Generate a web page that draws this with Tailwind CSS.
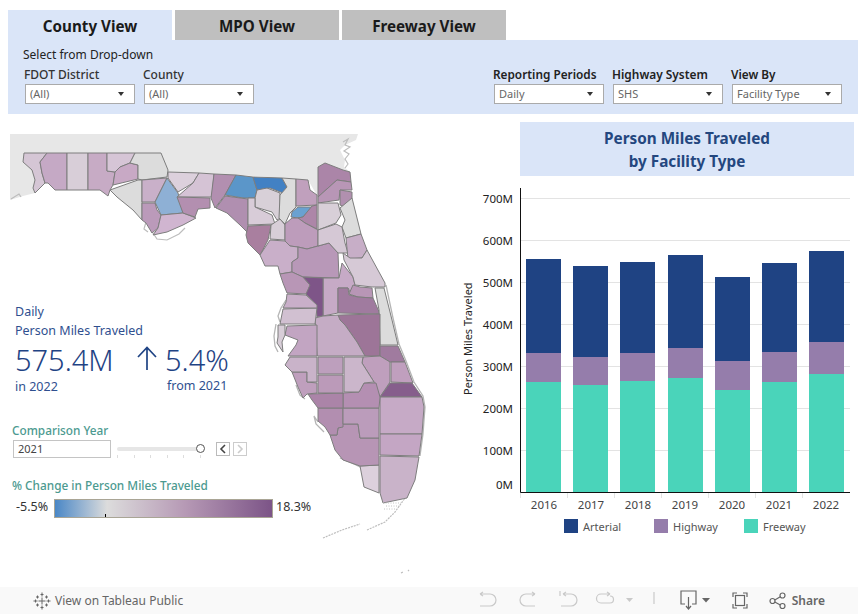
<!DOCTYPE html>
<html>
<head>
<meta charset="utf-8">
<script src="https://cdn.jsdelivr.net/npm/@tailwindcss/browser@4"></script>
</head>
<body class="bg-white font-['Noto_Sans',sans-serif] w-[858px] h-[614px] overflow-hidden flex flex-col">
<div class="h-[587px] pt-[10px] relative">
  <div class="flex pl-2 h-[30px] gap-[3px]">
    <div class="w-[164px] bg-[#dae5f8] flex items-center justify-center pt-[2px] text-[15.2px] font-bold text-[#1a1a1a]">County View</div>
    <div class="w-[164px] bg-[#bfbfbf] flex items-center justify-center pt-[2px] text-[15.2px] font-bold text-[#1a1a1a]">MPO View</div>
    <div class="w-[164px] bg-[#bfbfbf] flex items-center justify-center pt-[2px] text-[15.2px] font-bold text-[#1a1a1a]">Freeway View</div>
  </div>
  <div class="ml-2 h-[74px] bg-[#dae5f8] flex justify-between pl-[15px] pr-4 text-[#222]">
    <div>
      <div class="text-[12px] leading-4 mt-[7px] ">Select from Drop-down</div>
      <div class="flex gap-[9px] mt-[4px] pl-[2px]">
        <div class="w-[110px]">
          <div class="text-[12px] leading-4 font-medium text-[#333] -ml-px">FDOT District</div>
          <div class="mt-px h-5 border border-[#aaa] bg-white flex items-center justify-between pl-1 pr-[10px] text-[11px] text-[#666]">(All)<span class="w-0 h-0 border-x-[3.5px] border-x-transparent border-t-[4px] border-t-[#333]"></span></div>
        </div>
        <div class="w-[110px]">
          <div class="text-[12px] leading-4 font-medium text-[#333] -ml-px">County</div>
          <div class="mt-px h-5 border border-[#aaa] bg-white flex items-center justify-between pl-1 pr-[10px] text-[11px] text-[#666]">(All)<span class="w-0 h-0 border-x-[3.5px] border-x-transparent border-t-[4px] border-t-[#333]"></span></div>
        </div>
      </div>
    </div>
    <div class="flex gap-[9px] mt-[26px]">
      <div class="w-[110px]">
        <div class="text-[11.8px] leading-4 font-semibold text-[#222] whitespace-nowrap -ml-px">Reporting Periods</div>
        <div class="mt-[2px] h-5 border border-[#aaa] bg-white flex items-center justify-between pl-1 pr-[10px] text-[11px] text-[#666]">Daily<span class="w-0 h-0 border-x-[3.5px] border-x-transparent border-t-[4px] border-t-[#333]"></span></div>
      </div>
      <div class="w-[110px]">
        <div class="text-[11.9px] leading-4 font-semibold text-[#222] whitespace-nowrap -ml-px">Highway System</div>
        <div class="mt-[2px] h-5 border border-[#aaa] bg-white flex items-center justify-between pl-1 pr-[10px] text-[11px] text-[#666]">SHS<span class="w-0 h-0 border-x-[3.5px] border-x-transparent border-t-[4px] border-t-[#333]"></span></div>
      </div>
      <div class="w-[110px]">
        <div class="text-[11.8px] leading-4 font-semibold text-[#222] whitespace-nowrap -ml-px">View By</div>
        <div class="mt-[2px] h-5 border border-[#aaa] bg-white flex items-center justify-between pl-1 pr-[10px] text-[11px] text-[#666]">Facility Type<span class="w-0 h-0 border-x-[3.5px] border-x-transparent border-t-[4px] border-t-[#333]"></span></div>
      </div>
    </div>
  </div>

  <div class="flex h-[473px]">
    <div class="relative w-[460px] shrink-0">
      <svg class="absolute left-0 top-0" width="460" height="473" viewBox="0 114 460 473">
        <path d="M10 134H358L356 140 345 145 340 150 345 160 344 167 350 172 343 170 325 163 318 167 318 197 308 180 296 179 282 178 253 176 237 175 214 174 199 173 168 172 161 153 24 153 23 162 32 170 35 180 33 188 35 193 23 196 10 200Z" fill="#e7e7e7"/>
        <path d="M343 142l5-3-3 6 5 2-6 4 5 3-4 5 3 5-3 4M11 199l8-5 2 3M153 233l4 6 10 1 12-6 6-6M146 222l-2 7 4 3" fill="none" stroke="#bdbdbd" stroke-width="1.2"/>
        <path d="M386 285 393 318 399 344 406 361 414 382 423 396 425 407 423 434 420 456M278 352l-3-6-1-10 2-12M280 322l-2-6 3-8 5-8M296 385l4 10 5 4M318 422l-4-6 2 8 8 8M340 458l16 7 6 3" fill="none" stroke="#b5b5b5" stroke-width="1.300"/>
        <g stroke="#7d7d7d" stroke-width="1" stroke-linejoin="round">
          <path fill="#d5c6d5" d="M24 153H47L40 162 42 173 45 183 35 193 33 188 35 180 32 170 23 162Z"/>
          <path fill="#c5a9c5" d="M47 153H67V190H55L48 183 45 183 42 173 40 162Z"/>
          <path fill="#d8ced8" d="M67 153H88V190H78L67 190Z"/>
          <path fill="#c7abc5" d="M88 153H107V171L115 172 113 185 110 190 108 196 100 190 88 190Z"/>
          <path fill="#d6c5d6" d="M107 153H135L130 163 120 167 115 172 107 171Z"/>
          <path fill="#c8a9c5" d="M115 172 120 167 130 163 138 165V179L113 185Z"/>
          <path fill="#dcdcdc" d="M135 153H161L168 170 167 177 142 180 138 179V165L130 163Z"/>
          <path fill="#dcdcdc" d="M110 190 138 180 142 180V220L133 210 117 197Z"/>
          <path fill="#c9b0c9" d="M142 180 167 178 155 202H142Z"/>
          <path fill="#bb9aba" d="M142 203H155L157 210 161 215 158 228 152 233 146 223 142 220Z"/>
          <path fill="#8eb0d5" d="M167 178 178 193 183 213 161 215 155 202Z"/>
          <path fill="#d0b5d0" d="M161 215 183 213 196 218 183 225 167 232 153 235 158 228Z"/>
          <path fill="#dcd0dc" d="M168 172 199 173 193 183 178 192 168 178Z"/>
          <path fill="#d5c3d5" d="M199 173 214 174 212 197 177 197 193 183Z"/>
          <path fill="#b38fb0" d="M177 197 210 198V208L198 209 195 217 183 213Z"/>
          <path fill="#b28fb0" d="M214 174 236 175 225 195 215 208 211 198Z"/>
          <path fill="#5b96c9" d="M236 175 253 177 257 190 255 198 243 198 225 195Z"/>
          <path fill="#b08fb0" d="M216 208 225 196 248 199V233L240 225 227 213Z"/>
          <path fill="#4281c4" d="M253 177 282 178 287 187 283 193 270 188 257 190Z"/>
          <path fill="#d8d0d8" d="M257 190 267 188 280 193 280 218 277 220 272 212 255 207V198Z"/>
          <path fill="#d8ccd8" d="M248 198H255V207L272 215 275 224 248 225Z"/>
          <path fill="#a97f9f" d="M248 226 271 225 268 240 260 255 248 243 246 235Z"/>
          <path fill="#dcdcdc" d="M282 178 296 179V207L290 213 285 224 279 218 280 195 287 187Z"/>
          <path fill="#c0a0bd" d="M296 179 308 180 310 190 317 195V205L296 206Z"/>
          <path fill="#6aa1d0" d="M292 212 298 207H312L303 217 298 218 291 217Z"/>
          <path fill="#ad86a8" d="M312 206 317 205V229L305 223 298 218 303 217Z"/>
          <path fill="#d8ced8" d="M271 225 280 219 285 225V240L270 239Z"/>
          <path fill="#bd9cbb" d="M285 224 292 218H298L305 223 318 230V246L307 249 298 247 290 246 285 241Z"/>
          <path fill="#c9afc9" d="M270 240 285 241 290 246 298 247V258L292 262V272L280 274 278 266H265L260 255Z"/>
          <path fill="#b898b8" d="M298 247 307 249 318 246 329 243 338 253 339 278 303 277 292 272V262L298 258Z"/>
          <path fill="#b896b6" d="M280 274 292 272 303 277 310 285 307 294 287 293 283 283Z"/>
          <path fill="#c6aac6" d="M323 278H339L342 263 353 277 355 285 350 292 348 288H338V313L323 316Z"/>
          <path fill="#7e5588" d="M303 277 323 278V316L317 317 316 305 306 294 310 285Z"/>
          <path fill="#ab85a8" d="M318 167 325 163 343 170 350 172 351 182 337 180 318 197Z"/>
          <path fill="#b896b6" d="M318 197 337 180 351 182 352 190 340 190 339 200 318 203Z"/>
          <path fill="#b190af" d="M340 190 352 192V198L347 208 340 205Z"/>
          <path fill="#d8cfd8" d="M318 203H338L341 215 336 223 318 230Z"/>
          <path fill="#dcdcdc" d="M340 208 352 198 361 234 346 238 342 227 345 220Z"/>
          <path fill="#d5c8d5" d="M318 230 336 224 342 227 345 243 348 253H338L329 243 318 246Z"/>
          <path fill="#c7aec7" d="M346 238 361 234 367 250 362 258 348 259Z"/>
          <path fill="#d6c9d6" d="M343 253 350 258H362L367 250 385 283V287L372 287 355 285 353 277 344 260Z"/>
          <path fill="#b896b6" d="M349 294 353 285 360 287 372 288 373 298 358 297Z"/>
          <path fill="#a07b9f" d="M338 288H348L349 295 358 297 373 298 380 314 338 313Z"/>
          <path fill="#dcdcdc" d="M375 288H384L392 320 398 345H380L379 310Z"/>
          <path fill="#9d7598" d="M338 315 380 314V356H365L357 342 345 325 340 320Z"/>
          <path fill="#a07b9f" d="M380 346H398L405 362H390L380 356Z"/>
          <path fill="#c09fbe" d="M391 362H405L413 383 391 382Z"/>
          <path fill="#bf9fbd" d="M363 357 380 356 390 362V382L380 397 374 382 362 363Z"/>
          <path fill="#865e8c" d="M380 397 390 383 412 383 422 397Z"/>
          <path fill="#c6aac6" d="M380 397H422L424 407 422 434H380Z"/>
          <path fill="#c4a6c4" d="M380 434H422L419 456 380 455Z"/>
          <path fill="#c9b3c9" d="M380 456 419 457 415 480 407 498 383 503 380 493Z"/>
          <path fill="#dcd0dc" d="M360 466 379 465V493L364 487Z"/>
          <path fill="#b795b5" d="M330 435 337 435 338 428 343 424H358L360 438H379V465L360 466 343 460 335 450Z"/>
          <path fill="#b28eb0" d="M318 408H343V427L338 428 337 435H330L325 427 318 421Z"/>
          <path fill="#bb9cbb" d="M343 408H379V438H360L358 424H343Z"/>
          <path fill="#b48fb2" d="M343 393 359 392 364 383H376L380 397 379 408H343Z"/>
          <path fill="#ab84a8" d="M308 394 343 393V408H318L312 400Z"/>
          <path fill="#bf9fbd" d="M292 372H307V382L317 383V393L307 394 303 398 298 387Z"/>
          <path fill="#bb9ab9" d="M318 375H343V393H318Z"/>
          <path fill="#bd9fbd" d="M318 357H343V374H318Z"/>
          <path fill="#cbb6cb" d="M344 357H363L362 363 374 382 364 383 359 392 344 392Z"/>
          <path fill="#c9b3c9" d="M290 357H317V382H307V372H292L285 365Z"/>
          <path fill="#c5acc5" d="M315 318 323 316 338 315 340 320 345 325 357 342 365 356H317Z"/>
          <path fill="#c2a5c2" d="M287 326 317 325V356H288L296 345 298 340 285 335Z"/>
          <path fill="#d1c0d1" d="M283 309 317 308 315 324H280Z"/>
          <path fill="#d8ced8" d="M278 325H285V335L282 342 283 352 277 343 278 337Z"/>
          <path fill="#c9afc9" d="M287 294 306 295 317 305V308L283 308 286 302Z"/>
        </g>
        <path d="M323 538 342 530 360 524M367 530 385 522 395 512 405 498M401 573l2-1M408 571l1-1" fill="none" stroke="#bdbdbd" stroke-width="1.2" stroke-dasharray="2 1"/>
        <path d="M386 506h14M384 509h12M383 503h18" fill="none" stroke="#c4c4c4" stroke-width="1" stroke-dasharray="1 1.500"/>
      </svg>

      <div class="absolute left-[15px] top-[188px] text-[#2f4f8f] text-[12.5px] leading-[19px]">
        <div>Daily</div>
        <div class="whitespace-nowrap">Person Miles Traveled</div>
      </div>
      <div class="absolute left-[15px] top-[228px] text-[#1f4384] text-[29px] leading-9 font-light">575.4M</div>
      <div class="absolute left-[15px] top-[263px] text-[#2f4f8f] text-[12.5px] leading-5">in 2022</div>
      <svg class="absolute left-[137px] top-[232px]" width="20" height="24" viewBox="0 0 20 24" fill="none" stroke="#1f4384" stroke-width="1.7"><path d="M10 24V1.500M1 11 10 1.500 19 11"/></svg>
      <div class="absolute left-[165px] top-[228px] text-[#1f4384] text-[29px] leading-9 font-light">5.4%</div>
      <div class="absolute left-[167px] top-[262px] text-[#2f4f8f] text-[12.5px] leading-5">from 2021</div>

      <div class="absolute left-[12px] top-[308px] text-[11.800px] leading-4 font-medium text-[#4c9a90]">Comparison Year</div>
      <div class="absolute left-[13px] top-[326px] w-[98px] h-[18px] border border-[#c4c4c4] flex items-center pl-1 text-[11px] text-[#444]">2021</div>
      <div class="absolute left-[117px] top-[328px] w-[87px] h-[16px]">
        <div class="h-1 mt-[5px] bg-[#e6e6e6] rounded-sm"></div>
        <div class="flex justify-between w-[84px] mt-1">
          <span class="w-px h-[3px] bg-[#ddd]"></span><span class="w-px h-[3px] bg-[#ddd]"></span><span class="w-px h-[3px] bg-[#ddd]"></span><span class="w-px h-[3px] bg-[#ddd]"></span><span class="w-px h-[3px] bg-[#ddd]"></span><span class="w-px h-[3px] bg-[#ddd]"></span>
        </div>
        <div class="absolute left-[79px] top-[2px] size-[9px] rounded-full bg-white border border-[#555]"></div>
      </div>
      <div class="absolute left-[216px] top-[328px] size-[14px] border border-[#bbb] flex items-center justify-center"><svg width="8" height="10" viewBox="0 0 8 10" fill="none" stroke="#444" stroke-width="1.6"><path d="M6 1 2 5l4 4"/></svg></div>
      <div class="absolute left-[233px] top-[328px] size-[14px] border border-[#ccc] flex items-center justify-center"><svg width="8" height="10" viewBox="0 0 8 10" fill="none" stroke="#ccc" stroke-width="1.6"><path d="M2 1l4 4-4 4"/></svg></div>

      <div class="absolute left-[12px] top-[363px] text-[11.800px] leading-4 font-medium text-[#4c9a90] whitespace-nowrap">% Change in Person Miles Traveled</div>
      <div class="absolute left-[16px] top-[385px] text-[12.5px] leading-4 text-[#333]">-5.5%</div>
      <div class="absolute left-[54px] top-[385px] w-[219px] h-[19px] border border-[#a9a595] bg-[linear-gradient(to_right,#4a87c6_0%,#dcdcdc_24%,#b699b5_60%,#7c5487_100%)]">
        <div class="absolute left-[50px] bottom-0 w-px h-[3px] bg-black"></div>
      </div>
      <div class="absolute left-[276px] top-[385px] text-[12.5px] leading-4 text-[#333]">18.3%</div>
    </div>

    <div class="flex-1 pt-2 min-w-0">
      <div class="ml-[60px] w-[334px] h-[54px] bg-[#dae5f8] flex flex-col items-center justify-center pt-px text-[15.3px] leading-[23px] font-bold text-[#24477f]">
        <div>Person Miles Traveled</div>
        <div>by Facility Type</div>
      </div>
      <svg class="block" width="398" height="411" viewBox="460 176 398 411">
        <g stroke="#e3e3e3" stroke-width="1">
          <path d="M521 198.5H850M521 240.5H850M521 282.5H850M521 324.5H850M521 366.5H850M521 408.500H850M521 450.500H850M520.500 493V498M567.500 493V498M614.500 493V498M661.500 493V498M708.500 493V498M755.500 493V498M802.500 493V498"/>
        </g>
        <g fill="#1f4383">
          <rect x="526" y="259" width="35" height="94"/><rect x="573" y="266" width="35" height="91"/><rect x="620" y="262" width="35" height="91"/><rect x="668" y="255" width="35" height="93"/><rect x="715" y="277" width="35" height="84"/><rect x="762" y="263" width="35" height="89"/><rect x="809" y="251" width="35" height="91"/>
        </g>
        <g fill="#957dab">
          <rect x="526" y="353" width="35" height="29"/><rect x="573" y="357" width="35" height="28"/><rect x="620" y="353" width="35" height="28"/><rect x="668" y="348" width="35" height="30"/><rect x="715" y="361" width="35" height="29"/><rect x="762" y="352" width="35" height="30"/><rect x="809" y="342" width="35" height="32"/>
        </g>
        <g fill="#4ad4ba">
          <rect x="526" y="382" width="35" height="110"/><rect x="573" y="385" width="35" height="107"/><rect x="620" y="381" width="35" height="111"/><rect x="668" y="378" width="35" height="114"/><rect x="715" y="390" width="35" height="102"/><rect x="762" y="382" width="35" height="110"/><rect x="809" y="374" width="35" height="118"/>
        </g>
        <path d="M520.500 188V492.500H850" fill="none" stroke="#111" stroke-width="1"/>
        <g font-size="11.5" fill="#222" text-anchor="end">
          <text x="513" y="203">700M</text><text x="513" y="245">600M</text><text x="513" y="287">500M</text><text x="513" y="329">400M</text><text x="513" y="371">300M</text><text x="513" y="413">200M</text><text x="513" y="455">100M</text><text x="513" y="489">0M</text>
        </g>
        <text transform="translate(472 395) rotate(-90)" font-size="11" fill="#222">Person Miles Traveled</text>
        <g font-size="11.5" fill="#444" text-anchor="middle">
          <text x="544" y="509">2016</text><text x="591" y="509">2017</text><text x="638" y="509">2018</text><text x="685" y="509">2019</text><text x="732" y="509">2020</text><text x="779" y="509">2021</text><text x="826" y="509">2022</text>
        </g>
        <rect x="564" y="519" width="14" height="14" fill="#1f4383"/><rect x="654" y="519" width="14" height="14" fill="#957dab"/><rect x="744" y="519" width="14" height="14" fill="#4ad4ba"/>
        <g font-size="11" fill="#555">
          <text x="583" y="531">Arterial</text><text x="673" y="531">Highway</text><text x="763" y="531">Freeway</text>
        </g>
      </svg>
    </div>
  </div>
</div>

<div class="h-[27px] bg-[#f9f9f9] flex items-center text-[#666] text-[12px]">
  <svg class="ml-[33px]" width="18" height="18" viewBox="0 0 18 18" fill="none" stroke="#666" stroke-width="1"><path d="M9 .500v4M7.500 2.500h3M9 13.500v4M7.500 15.500h3M.500 9h4M2.500 7.500v3M13.500 9h4M15.500 7.500v3M9 5.500v7M5.500 9h7M4.500 3.500v3M3 5h3M13.500 3.500v3M12 5h3M4.500 11.500v3M3 13h3M13.500 11.500v3M12 13h3"/></svg>
  <span class="ml-[4px]">View on Tableau Public</span>
  <div class="ml-auto flex items-center">
    <svg width="298" height="27" viewBox="470 587 298 27" fill="none" stroke-width="1.2">
      <g stroke="#c9c9c9"><path d="M479 594h10a5 5 0 0 1 0 12h-10M479 594l3-2M479 594l3 2"/><path d="M534 594h-9a5 5 0 0 0 0 12h9M534 594l-3-2M534 594l-3 2"/><path d="M559 591v5M562 594h8a5 5 0 0 1 0 12h-10M562 594l3-2M562 594l3 2"/><path d="M609 594h-9a3.500 3.500 0 0 0 0 9h9a3.500 3.500 0 0 0 0-7M609 594l-3-2M609 594l-3 2"/><path d="M653 592v12"/></g>
      <path d="M625 598h7l-3.500 4z" fill="#c9c9c9"/>
      <g stroke="#666"><path d="M684 604h-4v-13h15v13h-4M687.500 597v11M685 606l2.500 3 2.500-3"/><path d="M732 597v-4h4M742 593h4v4M746 604v4h-4M736 608h-4v-4"/><rect x="734.500" y="595.500" width="9" height="10"/></g>
      <path d="M701 598h8l-4 4.500z" fill="#666"/>
    </svg>
    <svg width="18" height="18" viewBox="0 0 18 18" fill="none" stroke="#666" stroke-width="1.2"><circle cx="3.500" cy="9" r="2.500"/><circle cx="13.500" cy="3.500" r="2.500"/><circle cx="13.500" cy="14" r="2.500"/><path d="M5.800 8 11.300 4.800M5.800 10 11.300 13"/></svg>
    <span class="ml-[5px] mr-[33px] font-semibold">Share</span>
  </div>
</div>
</body>
</html>
